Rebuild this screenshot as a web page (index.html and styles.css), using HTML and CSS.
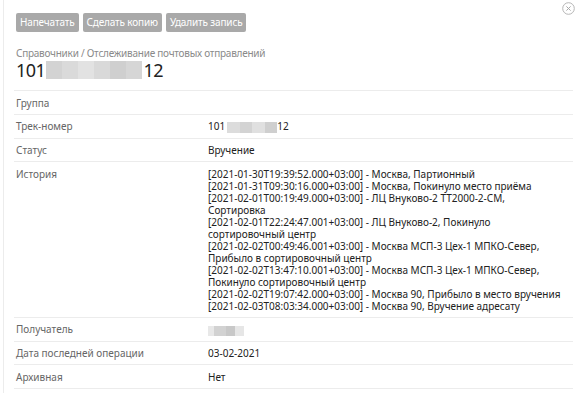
FILE: index.html
```html
<!DOCTYPE html>
<html lang="ru">
<head>
<meta charset="utf-8">
<link rel="stylesheet" href="styles.css">
</head>
<body>
<div class="page">
  <button class="close" aria-label="Закрыть">
    <svg width="13" height="13" viewBox="0 0 13 13"><circle cx="6.5" cy="6.5" r="5.8" fill="none" stroke="#b5b5b5" stroke-width="1"/><path d="M4.4 4.4 L8.6 8.6 M8.6 4.4 L4.4 8.6" stroke="#a8a8a8" stroke-width="1" fill="none"/></svg>
  </button>
  <div class="toolbar">
    <button class="btn">Напечатать</button>
    <button class="btn">Сделать копию</button>
    <button class="btn">Удалить запись</button>
  </div>
  <div class="crumbs">Справочники / Отслеживание почтовых отправлений</div>
  <h1 class="title">101<span class="blur blur-title"><i></i><i></i><i></i><i></i><i></i><i></i></span>12</h1>
  <div class="table">
    <div class="row"><div class="label">Группа</div><div class="value"></div></div>
    <div class="row"><div class="label">Трек-номер</div><div class="value">101<span class="blur blur-track"><i></i><i></i><i></i><i></i></span>12</div></div>
    <div class="row"><div class="label">Статус</div><div class="value">Вручение</div></div>
    <div class="row"><div class="label">История</div><div class="value history">
      <div>[2021-01-30T19:39:52.000+03:00] - Москва, Партионный</div>
      <div>[2021-01-31T09:30:16.000+03:00] - Москва, Покинуло место приёма</div>
      <div>[2021-02-01T00:19:49.000+03:00] - ЛЦ Внуково-2 ТТ2000-2-СМ,<br>Сортировка</div>
      <div>[2021-02-01T22:24:47.001+03:00] - ЛЦ Внуково-2, Покинуло<br>сортировочный центр</div>
      <div>[2021-02-02T00:49:46.001+03:00] - Москва МСП-3 Цех-1 МПКО-Север,<br>Прибыло в сортировочный центр</div>
      <div>[2021-02-02T13:47:10.001+03:00] - Москва МСП-3 Цех-1 МПКО-Север,<br>Покинуло сортировочный центр</div>
      <div>[2021-02-02T19:07:42.000+03:00] - Москва 90, Прибыло в место вручения</div>
      <div>[2021-02-03T08:03:34.000+03:00] - Москва 90, Вручение адресату</div>
    </div></div>
    <div class="row"><div class="label">Получатель</div><div class="value"><span class="blur blur-name"><i></i><i></i><i></i><i></i></span></div></div>
    <div class="row"><div class="label">Дата последней операции</div><div class="value">03-02-2021</div></div>
    <div class="row"><div class="label">Архивная</div><div class="value">Нет</div></div>
  </div>
</div>
</body>
</html>
```
FILE: styles.css
```css
* { box-sizing: border-box; }
html, body { margin: 0; padding: 0; background: #fff; }
body {
  font-family: "Noto Sans", "Open Sans", sans-serif;
  color: #222;
  width: 585px;
  height: 393px;
  overflow: hidden;
}
.page {
  position: relative;
  margin-left: 3px;
  border-left: 1px solid #ececec;
  height: 393px;
  padding: 13px 12px 0 12px;
}
.close {
  position: absolute;
  top: 2px;
  right: 10px;
  border: 0;
  background: none;
  padding: 0;
  margin: 0;
  width: 13px;
  height: 13px;
  display: block;
}
.close svg { display: block; }
.toolbar { display: flex; gap: 4px; }
.btn {
  margin: 0;
  border: 0;
  background: #a9a9a9;
  color: #fff;
  font-family: "Noto Sans", sans-serif;
  font-size: 10px;
  height: 19px;
  padding: 0 4px;
  border-radius: 2px;
  line-height: 19px;
  letter-spacing: -0.15px;
}
.crumbs {
  margin-top: 15px;
  font-size: 10px;
  color: #8a8a8a;
  line-height: 12px;
  letter-spacing: -0.25px;
}
.title {
  margin: 1px 0 0 0;
  font-weight: 400;
  font-size: 18px;
  line-height: 20px;
  letter-spacing: -0.5px;
  color: #222;
  display: flex;
  align-items: center;
}
.blur { display: inline-flex; }
.blur i { display: block; height: 100%; }
.blur-title { width: 96px; height: 18px; margin: 0 1px 0 1px; }
.blur-title i:nth-child(1) { width: 16px; background: #d3d3d3; }
.blur-title i:nth-child(2) { width: 16px; background: #dadada; }
.blur-title i:nth-child(3) { width: 16px; background: #e2e2e2; }
.blur-title i:nth-child(4) { width: 16px; background: #d9d9d9; }
.blur-title i:nth-child(5) { width: 16px; background: #cfcfcf; }
.blur-title i:nth-child(6) { width: 16px; background: #d6d6d6; }
.blur-track { width: 50px; height: 11px; margin: 0 0 0 2px; vertical-align: middle; }
.blur-track i:nth-child(1) { width: 13px; background: #dcdcdc; }
.blur-track i:nth-child(2) { width: 12px; background: #d3d3d3; }
.blur-track i:nth-child(3) { width: 13px; background: #e0e0e0; }
.blur-track i:nth-child(4) { width: 12px; background: #cfcfcf; }
.blur-name { width: 36px; height: 10px; vertical-align: middle; }
.blur-name i:nth-child(1) { width: 6px; background: #e8e8e8; }
.blur-name i:nth-child(2) { width: 12px; background: #d2d2d2; }
.blur-name i:nth-child(3) { width: 9px; background: #c8c8c8; }
.blur-name i:nth-child(4) { width: 9px; background: #e6e6e6; }
.table {
  margin-top: 10px;
  margin-left: -2px;
  width: 559px;
  border-top: 1px solid #ececec;
}
.row {
  display: grid;
  grid-template-columns: 194px 1fr;
  border-bottom: 1px solid #ececec;
  padding: 5.5px 0 5px 0;
  font-size: 10px;
  line-height: 12px;
}
.label { color: #666; padding-left: 2px; min-height: 12px; }
.value { color: #222; }
.history div { white-space: nowrap; }
```
